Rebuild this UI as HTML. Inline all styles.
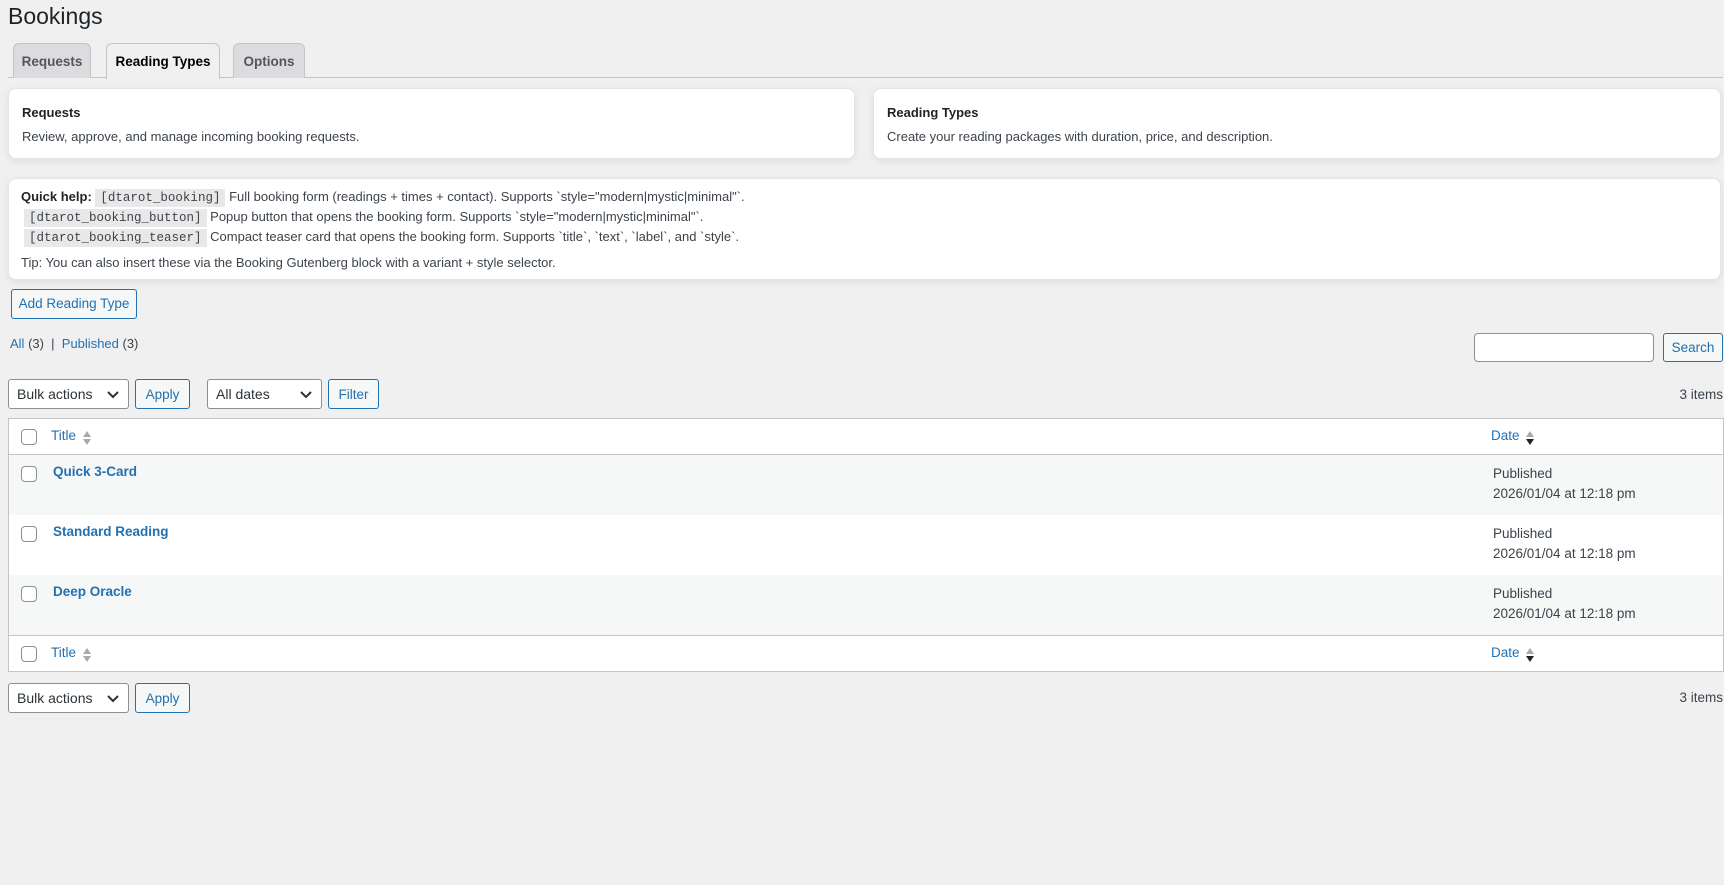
<!DOCTYPE html>
<html><head><meta charset="utf-8"><style>
*{box-sizing:border-box;margin:0;padding:0}
body{width:1724px;height:885px;background:#f0f0f1;font-family:"Liberation Sans",sans-serif;font-size:13.5px;color:#3c434a;position:relative;overflow:hidden}
.a{position:absolute}
h1{position:absolute;left:8px;top:3px;font-size:23px;font-weight:400;color:#1d2327}
.tab{position:absolute;top:43px;height:35px;border:1px solid #c3c4c7;border-bottom:none;background:#dcdcde;border-radius:6px 6px 0 0;font-weight:700;color:#50575e;font-size:13.5px;text-align:center;line-height:35px}
.tab.on{background:#f0f0f1;color:#000;height:36px}
.card{position:absolute;background:#fff;border-radius:8px;box-shadow:0 2px 8px rgba(0,0,0,.08);border:1px solid #e5e5e5}
.card b{position:absolute;left:13px;top:16px;color:#1d2327;font-size:13px}
.card span{position:absolute;left:13px;top:40px;font-size:13px}
code{font-family:"Liberation Mono",monospace;background:#e8e8e8;padding:2px 5px;font-size:12.5px;color:#3c434a}
.btn{position:absolute;border:1px solid #2271b1;color:#2271b1;background:#f6f7f7;border-radius:3px;text-align:center;font-size:13.5px}
.sel{position:absolute;border:1px solid #8c8f94;background:#fff;border-radius:3px;color:#2c3338;font-size:14px;padding-left:8px}
.sel svg{position:absolute;right:8px;top:10px}
a{color:#2271b1;text-decoration:none}
.cb{position:absolute;width:16px;height:16px;border:1px solid #8c8f94;border-radius:4px;background:#fff;left:12px}
.row{position:absolute;left:0;right:0}
</style></head><body>
<h1>Bookings</h1>
<div class="a" style="left:8px;right:1px;top:77px;height:1px;background:#c3c4c7"></div>
<div class="tab" style="left:13px;width:78px">Requests</div>
<div class="tab on" style="left:106px;width:114px">Reading Types</div>
<div class="tab" style="left:233px;width:72px">Options</div>

<div class="card" style="left:8px;top:88px;width:847px;height:71px"><b>Requests</b><span>Review, approve, and manage incoming booking requests.</span></div>
<div class="card" style="left:873px;top:88px;width:848px;height:71px"><b>Reading Types</b><span>Create your reading packages with duration, price, and description.</span></div>

<div class="card" style="left:8px;top:178px;width:1713px;height:102px;font-size:13px">
<div class="a" style="left:12px;top:10px"><b style="position:static;color:#1d2327;font-size:13px">Quick help:</b> <code>[dtarot_booking]</code> Full booking form (readings + times + contact). Supports `style="modern|mystic|minimal"`.</div>
<div class="a" style="left:15px;top:30px"><code>[dtarot_booking_button]</code> Popup button that opens the booking form. Supports `style="modern|mystic|minimal"`.</div>
<div class="a" style="left:15px;top:50px"><code>[dtarot_booking_teaser]</code> Compact teaser card that opens the booking form. Supports `title`, `text`, `label`, and `style`.</div>
<div class="a" style="left:12px;top:76px">Tip: You can also insert these via the Booking Gutenberg block with a variant + style selector.</div>
</div>

<div class="btn" style="left:11px;top:289px;width:126px;height:30px;line-height:28px">Add Reading Type</div>
<div class="a" style="left:10px;top:336px;font-size:13px"><a>All</a> (3) &nbsp;| &nbsp;<a>Published</a> (3)</div>
<div class="a" style="left:1474px;top:333px;width:180px;height:29px;border:1px solid #8c8f94;border-radius:4px;background:#fff"></div>
<div class="btn" style="left:1663px;top:333px;width:60px;height:29px;line-height:27px">Search</div>

<div class="sel" style="left:8px;top:379px;width:121px;height:30px;line-height:28px">Bulk actions<svg width="14" height="9" viewBox="0 0 14 9"><path d="M2 2l5 5 5-5" stroke="#2c3338" stroke-width="2" fill="none"/></svg></div>
<div class="btn" style="left:135px;top:379px;width:55px;height:30px;line-height:29px">Apply</div>
<div class="sel" style="left:207px;top:379px;width:115px;height:30px;line-height:28px">All dates<svg width="14" height="9" viewBox="0 0 14 9"><path d="M2 2l5 5 5-5" stroke="#2c3338" stroke-width="2" fill="none"/></svg></div>
<div class="btn" style="left:328px;top:379px;width:51px;height:30px;line-height:29px">Filter</div>
<div class="a" style="right:1px;top:387px;color:#3c434a">3 items</div>

<div class="a" style="left:8px;top:418px;width:1716px;height:254px;border:1px solid #c3c4c7;background:#fff">
 <div class="row" style="top:0;height:36px;border-bottom:1px solid #c3c4c7">
  <div class="cb" style="top:10px"></div>
  <a class="a" style="left:42px;top:9px">Title</a>
  <svg class="a" style="left:73px;top:11px" width="10" height="16"><path d="M5 1l4 6H1z" fill="#a7aaad"/><path d="M5 15l4-6H1z" fill="#a7aaad"/></svg>
  <a class="a" style="left:1482px;top:9px">Date</a>
  <svg class="a" style="left:1516px;top:11px" width="10" height="16"><path d="M5 1l4 6H1z" fill="#a7aaad"/><path d="M5 15l4-6H1z" fill="#1d2327"/></svg>
 </div>
 <div class="row" style="top:36px;height:60px;background:#f6f7f7">
  <div class="cb" style="top:11px"></div>
  <a class="a" style="left:44px;top:9px;font-weight:700">Quick 3-Card</a>
  <div class="a" style="left:1484px;top:9px;line-height:20px">Published<br>2026/01/04 at 12:18 pm</div>
 </div>
 <div class="row" style="top:96px;height:60px;background:#fff">
  <div class="cb" style="top:11px"></div>
  <a class="a" style="left:44px;top:9px;font-weight:700">Standard Reading</a>
  <div class="a" style="left:1484px;top:9px;line-height:20px">Published<br>2026/01/04 at 12:18 pm</div>
 </div>
 <div class="row" style="top:156px;height:60px;background:#f6f7f7">
  <div class="cb" style="top:11px"></div>
  <a class="a" style="left:44px;top:9px;font-weight:700">Deep Oracle</a>
  <div class="a" style="left:1484px;top:9px;line-height:20px">Published<br>2026/01/04 at 12:18 pm</div>
 </div>
 <div class="row" style="top:216px;height:37px;border-top:1px solid #c3c4c7">
  <div class="cb" style="top:10px"></div>
  <a class="a" style="left:42px;top:9px">Title</a>
  <svg class="a" style="left:73px;top:11px" width="10" height="16"><path d="M5 1l4 6H1z" fill="#a7aaad"/><path d="M5 15l4-6H1z" fill="#a7aaad"/></svg>
  <a class="a" style="left:1482px;top:9px">Date</a>
  <svg class="a" style="left:1516px;top:11px" width="10" height="16"><path d="M5 1l4 6H1z" fill="#a7aaad"/><path d="M5 15l4-6H1z" fill="#1d2327"/></svg>
 </div>
</div>

<div class="sel" style="left:8px;top:683px;width:121px;height:30px;line-height:28px">Bulk actions<svg width="14" height="9" viewBox="0 0 14 9"><path d="M2 2l5 5 5-5" stroke="#2c3338" stroke-width="2" fill="none"/></svg></div>
<div class="btn" style="left:135px;top:683px;width:55px;height:30px;line-height:29px">Apply</div>
<div class="a" style="right:1px;top:690px">3 items</div>
</body></html>
